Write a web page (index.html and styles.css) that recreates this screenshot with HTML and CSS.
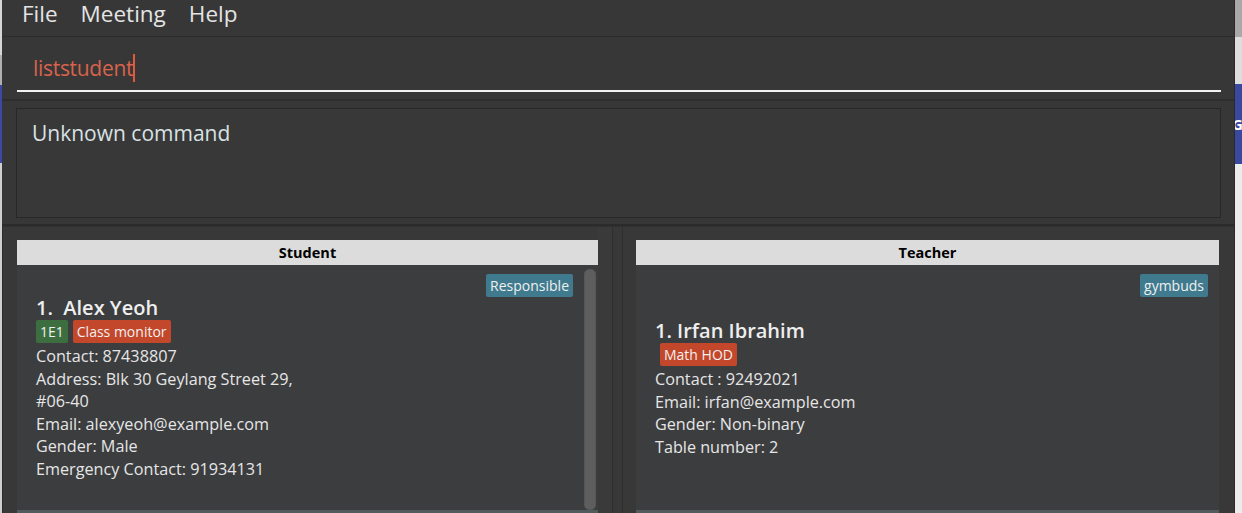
FILE: index.html
```html
<!DOCTYPE html>
<html lang="en">
<head>
<meta charset="utf-8">
<title>Address Book</title>
<link rel="stylesheet" href="styles.css">
</head>
<body>
<div class="screen">
  <div class="edge-left">
    <div class="el-a"></div><div class="el-b"></div><div class="el-c"></div><div class="el-d"></div>
  </div>
  <div class="app">
    <nav class="menubar">
      <span class="menu-item">File</span>
      <span class="menu-item">Meeting</span>
      <span class="menu-item">Help</span>
    </nav>
    <section class="command">
      <div class="command-field"><span class="command-text">liststudent</span><span class="caret"></span></div>
    </section>
    <section class="result">
      <div class="result-box">Unknown command</div>
    </section>
    <section class="lists">
      <div class="panel panel-student">
        <div class="panel-header">Student</div>
        <div class="panel-body">
          <div class="card">
            <div class="card-top"><span class="tag tag-blue">Responsible</span></div>
            <div class="card-name">1.&nbsp; Alex Yeoh</div>
            <div class="tags"><span class="tag tag-green">1E1</span><span class="tag tag-red">Class monitor</span></div>
            <div class="line">Contact: 87438807</div>
            <div class="line">Address: Blk 30 Geylang Street 29,<br>#06-40</div>
            <div class="line">Email: alexyeoh@example.com</div>
            <div class="line">Gender: Male</div>
            <div class="line">Emergency Contact: 91934131</div>
          </div>
          <div class="scrollbar"><div class="thumb"></div></div>
        </div>
      </div>
      <div class="divider"></div>
      <div class="panel panel-teacher">
        <div class="panel-header">Teacher</div>
        <div class="panel-body">
          <div class="card">
            <div class="card-top"><span class="tag tag-blue">gymbuds</span></div>
            <div class="card-name teacher-name">1. Irfan Ibrahim</div>
            <div class="tags teacher-tags"><span class="tag tag-red">Math HOD</span></div>
            <div class="line">Contact : 92492021</div>
            <div class="line">Email: irfan@example.com</div>
            <div class="line">Gender: Non-binary</div>
            <div class="line">Table number: 2</div>
          </div>
        </div>
      </div>
    </section>
  </div>
  <div class="edge-right">
    <div class="er-a"></div><div class="er-b"></div><div class="er-c">G</div><div class="er-d"></div>
  </div>
</div>
</body>
</html>
```

FILE: styles.css
```css
* { box-sizing: border-box; }
html, body { margin: 0; padding: 0; }
body {
  width: 1242px;
  height: 513px;
  overflow: hidden;
  background: #e9e9e9;
  font-family: "Open Sans", "Noto Sans", sans-serif;
}
.screen { display: flex; height: 513px; }

.edge-left { width: 2px; display: flex; flex-direction: column; background: #c8c8c8; }
.el-a { height: 55px; background: #d6d6d6; }
.el-b { height: 30px; background: #b0b0b0; }
.el-c { height: 78px; background: #3b4aa0; }
.el-d { flex: 1; background: #cfcfcf; }

.edge-right { width: 8px; display: flex; flex-direction: column; border-left: 1px solid #2a2a2a; }
.er-a { height: 37px; background: #a9a9a9; }
.er-b { height: 47px; background: #dedede; }
.er-c {
  height: 80px; background: #3a48a0; color: #fff; font-weight: bold;
  font-size: 15px; line-height: 80px; overflow: hidden; text-indent: -3px;
}
.er-d { flex: 1; background: #ececec; }

.app {
  width: 1232px;
  background: #373737;
  display: flex;
  flex-direction: column;
}

.menubar {
  height: 37px;
  border-bottom: 1px solid #2c2c2c;
  display: flex;
  align-items: flex-start;
  padding: 0 0 0 20px;
  gap: 23px;
}
.menu-item { color: #e4e4e4; font-size: 22.5px; line-height: 28px; }

.command {
  height: 64px;
  border-bottom: 2px solid #2e2e2e;
  padding: 0 13px 0 15px;
  display: flex;
  align-items: flex-end;
}
.command-field {
  width: 100%;
  height: 56px;
  border-bottom: 2px solid #f2f2f2;
  padding: 18px 0 0 16px;
  display: flex;
  align-items: flex-start;
  margin-bottom: 7px;
}
.command-text { color: #d9634c; font-size: 21px; line-height: 28px; letter-spacing: -0.3px; }
.caret { width: 2px; height: 28px; background: #e05a3c; }

.result {
  height: 125px;
  padding: 7px 13px 0 14px;
  border-bottom: 2px solid #2b2b2b;
}
.result-box {
  height: 110px;
  background: #383838;
  border: 1px solid #272727;
  color: #d9e1e5;
  font-size: 21px;
  padding: 10px 0 0 15px;
  line-height: 28px;
}

.lists {
  flex: 1;
  display: flex;
  padding: 13px 15px 0 14px;
  background: #383838;
  border-top: 1px solid #303030;
  border-left: 1px solid #2c2c2c;
}
.panel { display: flex; flex-direction: column; }
.panel-student { width: 581px; }
.panel-teacher { width: 583px; }
.divider {
  width: 38px;
  margin-top: -13px;
  background: linear-gradient(to right, #3a3a3a 0 14px, #2e2e2e 14px 15px, #383838 15px 24px, #2e2e2e 24px 25px, #383838 25px);
}
.panel-header {
  height: 25px;
  background: #dcdcdc;
  color: #000;
  font-weight: bold;
  font-size: 14.5px;
  line-height: 25px;
  text-align: center;
}
.panel-body {
  flex: 1;
  background: #3c3d3f;
  display: flex;
  border-bottom: 3px solid #525a5b;
}
.card { flex: 1; padding: 9px 8px 0 19px; }
.card-top { display: flex; justify-content: flex-end; height: 23px; }
.panel-teacher .card { padding-right: 11px; }

.tag {
  display: inline-block;
  color: #f0f0f0;
  font-size: 14px;
  line-height: 23px;
  height: 23px;
  padding: 0 4px;
  border-radius: 2px;
}
.tag-blue { background: #3f7a8e; }
.tag-green { background: #3c6e3f; }
.tag-red { background: #c3472a; }

.card-name {
  color: #eeeeee;
  font-weight: 600;
  font-size: 20px;
  line-height: 22px;
}
.teacher-name { margin-top: 23px; }
.tags { display: flex; gap: 5px; margin: 1px 0 2px; }
.teacher-tags { margin-left: 5px; }
.line { color: #e6e6e6; font-size: 16.2px; line-height: 22.6px; }

.scrollbar {
  width: 17px;
  padding: 4px 2px 0 3px;
}
.thumb {
  height: 100%;
  background: #5e5e5e;
  border-radius: 5px;
  border: 1px solid #565656;
}
```
